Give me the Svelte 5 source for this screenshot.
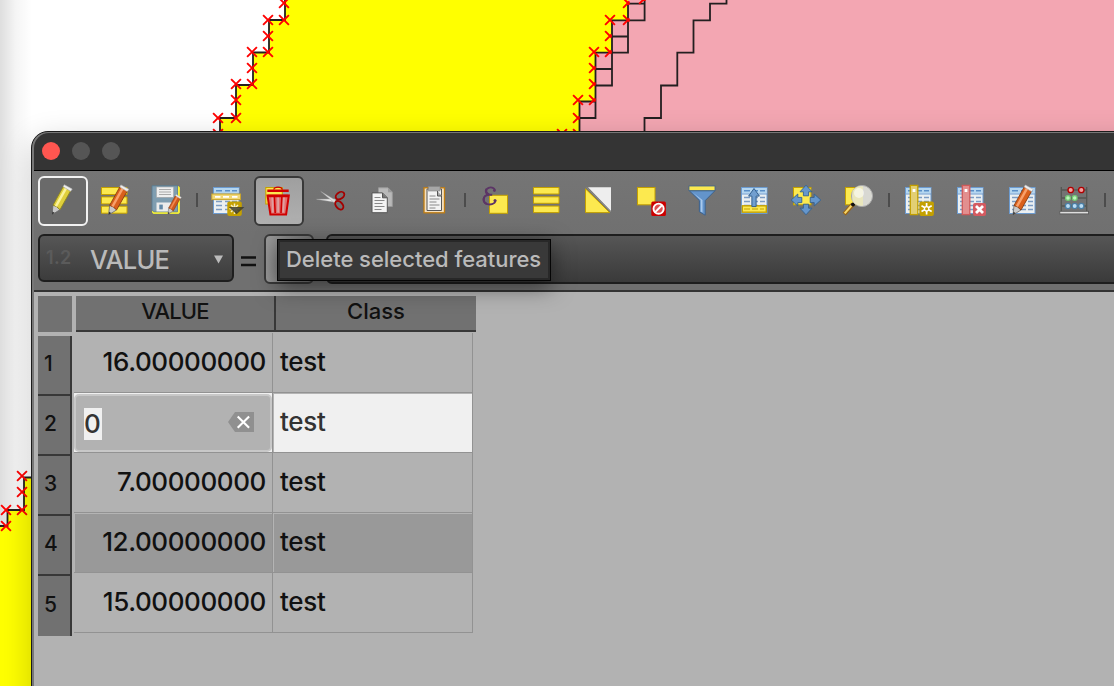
<script>
  const tools = [
    'pencil', 'edit', 'save', '|', 'add', 'trash', 'cut', 'copy', 'paste', '|',
    'expr', 'all', 'invert', 'deselect', 'filter', 'top', 'pan', 'zoom', '|',
    'newcol', 'delcol', 'editcol', 'abacus', '|'
  ];
  const labels = {
    pencil: 'Toggle editing', edit: 'Multi edit', save: 'Save edits', add: 'Add feature',
    trash: 'Delete selected features', cut: 'Cut', copy: 'Copy', paste: 'Paste',
    expr: 'Select by expression', all: 'Select all', invert: 'Invert selection', deselect: 'Deselect all',
    filter: 'Filter', top: 'Move selection to top', pan: 'Pan to selection', zoom: 'Zoom to selection',
    newcol: 'New field', delcol: 'Delete field', editcol: 'Organize columns', abacus: 'Field calculator'
  };
  const rows = [
    { value: '16.00000000', cls: 'test' },
    { value: '0', cls: 'test', editing: true },
    { value: '7.00000000', cls: 'test' },
    { value: '12.00000000', cls: 'test', dark: true },
    { value: '15.00000000', cls: 'test' }
  ];
  const vertices = [
    [284, 3], [284, 20], [268, 20], [268, 36], [268, 52], [252, 52], [252, 68], [252, 84],
    [236, 84], [236, 100], [236, 118], [218, 118], [218, 134],
    [610, 20], [594, 52], [578, 100], [562, 134],
    [22, 476], [22, 492], [22, 510], [6, 510], [6, 526]
  ];
  const halfVertices = [
    [628, 3], [628, 20], [610, 36], [610, 52], [594, 68], [594, 84], [594, 100], [578, 118], [578, 134], [644, -1]
  ];
</script>

{#snippet pencil(x, y, s, a, b, c)}
  <g transform="translate({x} {y}) scale({s})">
    <path d="M0 0L1-9.5L4.5-9L8-5Z" fill="#c9c9c9" stroke="#666" stroke-width=".8" />
    <path d="M0 0L.4-3.2L2.6-2Z" fill="#333" />
    <path d="M1-9.5L11.2-28L18.6-23.8L8-5L4.6-8Z" fill={b} stroke={c} stroke-width=".9" />
    <path d="M2.8-9L12.8-27L15-25.8L5-8Z" fill={a} />
    <path d="M11.2-28L12.3-30L20.2-25.6L18.6-23.4Z" fill="#eee" stroke="#bbb" stroke-width=".6" />
  </g>
{/snippet}

{#snippet sheet()}
  <rect x="11.5" y="11.5" width="25.5" height="26" fill="#ecf0f2" stroke="#6c9bd0" />
  <rect x="12" y="12" width="24.5" height="5.6" fill="#b4d6f0" />
  <path d="M14 14.8h6M23 14.8h5M30 14.8h5" stroke="#5a8fc8" stroke-width="1.5" />
  <path d="M12 18h25" stroke="#6c9bd0" />
  <path d="M14 21.5h6M23 21.5h5M30 21.5h5M14 25.5h6M23 25.5h5M30 25.5h5M14 29.5h6M23 29.5h5M30 29.5h5M14 33.5h6M23 33.5h5M30 33.5h5" stroke="#7c9cc4" stroke-width="1.3" />
{/snippet}

{#snippet icon(name)}
  <svg viewBox="0 0 50 50" aria-hidden="true">
    {#if name === 'pencil'}
      {@render pencil(14, 38.7, 1, '#fbf39a', '#dfcf3c', '#8c8420')}
    {:else if name === 'edit'}
      <g fill="#fce94f" stroke="#c4a000"><path d="M11.5 11.5h25.5v7h-25.5zM11.5 20.9h25.5v7h-25.5zM11.5 30.2h25.5v7h-25.5z" /></g>
      {@render pencil(18.6, 38.9, 1, '#f9a06a', '#d9601c', '#8a3d10')}
    {:else if name === 'save'}
      <rect x="10.5" y="10.5" width="27" height="27" rx="1.5" fill="#fff23a" stroke="#e6e63a" />
      <path d="M10 9.8h25.5v26H12L10 34z" fill="#7f9db0" stroke="#567a92" stroke-width=".8" />
      <rect x="14.5" y="11" width="17" height="10.3" fill="#eee" stroke="#a5a5a5" stroke-width=".6" />
      <path d="M17 13.5h12M17 16h12M17 18.5h12" stroke="#aaa" stroke-width="1.2" />
      <rect x="14.5" y="26.5" width="16" height="9" fill="#ececec" />
      <rect x="17.3" y="28.6" width="3.5" height="4.8" fill="#6389a8" />
      {@render pencil(26, 38.2, 0.66, '#f08a50', '#d0581c', '#8a3d10')}
    {:else if name === 'add'}
      {@render sheet()}
      <rect x="9.8" y="18" width="28.7" height="5.6" fill="#f0d878" stroke="#c9a52c" />
      <path d="M13 20.8h5.5M21 20.8h6M30 20.8h5.5" stroke="#fff" stroke-width="1.8" />
      <rect x="25.3" y="25.6" width="14.5" height="14.5" rx="2" fill="#c4a000" />
      <path d="M32.5 27.5v10.5M27.5 32.7h10M29 29l7 7M36 29l-7 7" stroke="#f7efc4" stroke-width="1.5" />
      <path d="M26.8 31h15.6l-7.8 7.2z" fill="#3d3c2c" fill-opacity=".85" />
    {:else if name === 'trash'}
      <rect x="11.8" y="11.5" width="16.5" height="16.5" fill="#fce94f" stroke="#c4a000" />
      <path d="M13.5 19.5h21.3l-2.7 19H16.4z" fill="#e27070" stroke="#d00000" stroke-width="2" />
      <path d="M20.4 21l.8 16M27.8 21l-.8 16" stroke="#d00000" stroke-width="1.6" />
      <path d="M18.3 21l.6 15.5M24.1 21v15.5M30 21l-.8 15.5" stroke="#dfa0a0" stroke-width="1.8" />
      <path d="M14 20h20.3" stroke="#d00000" stroke-width="2.6" />
      <path d="M13.3 14.7h21.4" stroke="#d00000" stroke-width="2.4" /><path d="M19.8 13.6q.4-2.4 4.2-2.4t4.2 2.4" fill="none" stroke="#d00000" stroke-width="1.3" />
    {:else if name === 'cut'}
      <path d="M10.5 23.3L29.5 23L28 26Z" fill="#ececec" stroke="#aaa" stroke-width=".4" /><path d="M14.6 15.3L30 24.5L28.5 27Z" fill="#dcdcdc" stroke="#999" stroke-width=".4" />
      <g fill="none" stroke="#a40000" stroke-width="1.9"><ellipse cx="34" cy="19.6" rx="4.7" ry="3.2" transform="rotate(-34 34 19.6)" /><ellipse cx="33.3" cy="29.2" rx="4.9" ry="3.2" transform="rotate(48 33.3 29.2)" /></g>
    {:else if name === 'copy'}
      <path d="M20.5 11.8h9.5l4.3 4.3v14.4H20.5z" fill="#b9b9b9" stroke="#999" /><path d="M30 12v4.2h4.2" fill="#999" />
      <path d="M14 16.9h10.5l4.8 4.8v15H14z" fill="#f3f3f3" stroke="#555" />
      <path d="M24.5 17v4.8h4.7" fill="#777" stroke="#555" /><path d="M16.5 21.5h6M16.5 24.5h10M16.5 27.5h8M16.5 30.5h10M16.5 33.5h7" stroke="#888" />
    {:else if name === 'paste'}
      <rect x="14" y="11.8" width="20.5" height="25" fill="#f4e0bf" stroke="#c17d11" stroke-width="1.3" />
      <path d="M17 13h14.5v21.5H17z" fill="#f3f3f3" stroke="#555" />
      <rect x="18.6" y="10.6" width="11.4" height="4.4" fill="#a7a7a7" stroke="#888" stroke-width=".6" />
      <path d="M27.5 15v5h4.5" fill="#aaa" stroke="#555" /><path d="M19.5 20h6M19.5 23h10M19.5 26h7M19.5 29h10M19.5 32h6" stroke="#888" />
    {:else if name === 'expr'}
      <rect x="19.5" y="19.3" width="18" height="18" fill="#fce94f" stroke="#c4a000" />
      <path d="M25 14.4c-.6-2.6-3.4-3.4-5.6-2.8c-4.6 1.2-4.6 6.6.4 7.2h2.4h-2.4c-8 0-8 9 -1.2 9.6c4 .3 6.4-1 7-4" fill="none" stroke="#5c3566" stroke-width="1.9" />
      <path d="M16.4 13c-1 2 0 4.6 2.6 5.4M14.2 21.5c-1.6 2.5 0 5.6 2.6 6.4" fill="none" stroke="#5c3566" stroke-width="2.2" />
      <circle cx="24.4" cy="14.6" r="1.4" fill="#5c3566" /><circle cx="25" cy="24.4" r="1.5" fill="#5c3566" />
    {:else if name === 'all'}
      <g fill="#fce94f" stroke="#c4a000"><path d="M11.5 11.5h25.5v6.5h-25.5zM11.5 20.8h25.5v6.5h-25.5zM11.5 30.1h25.5v6.5h-25.5z" /></g>
    {:else if name === 'invert'}
      <path d="M11.5 12.8v23.8h24.2z" fill="#fce94f" stroke="#c4a000" /><path d="M14 11.3h23v23.6z" fill="#eee" /><path d="M12.8 11.5L36.8 35.8" stroke="#8f8f88" />
    {:else if name === 'deselect'}
      <rect x="11.5" y="11.5" width="17.5" height="17.3" fill="#fce94f" stroke="#c4a000" />
      <rect x="25.3" y="25.4" width="14.6" height="14.6" rx="1.5" fill="#c00" /><circle cx="32.6" cy="32.7" r="5.1" fill="#e05050" stroke="#fff" stroke-width="1.9" /><path d="M36 29.3l-6.8 6.8" stroke="#fff" stroke-width="2" />
    {:else if name === 'filter'}
      <path d="M11.3 14.8h25.6L27.2 24.6v14.6l-5.8-3.4V24.6z" fill="#6394cb" stroke="#3f638c" />
      <path d="M15 16.8l7.7 7.3v11.5l1.8 1V24z" fill="#a9c9ec" /><rect x="11" y="10" width="26" height="4.6" fill="#fce94f" stroke="#3f638c" stroke-width=".8" />
    {:else if name === 'top'}
      {@render sheet()}
      <rect x="12.3" y="29.8" width="24" height="6.4" fill="#fce94f" stroke="#c4a000" stroke-width="1.4" /><path d="M14 33h6M22 33h6M30 33h4" stroke="#c4a000" />
      <path d="M24 12.5l5.4 7.6h-3.3v10.5h-4.2V20.1h-3.3z" fill="#729fcf" stroke="#34618f" />
    {:else if name === 'pan'}
      <rect x="11.5" y="11.5" width="17.5" height="17.3" fill="#fce94f" stroke="#c4a000" />
      <g fill="#6596cc" stroke="#34618f" stroke-width=".9">
        {#each [0, 90, 180, 270] as angle}<path d="M24 9.2l6 6.6h-3.4v4h-5.2v-4H18z" transform="rotate({angle} 24 24)" />{/each}
      </g>
    {:else if name === 'zoom'}
      <rect x="11.5" y="11.5" width="17.5" height="17.3" fill="#fce94f" stroke="#c4a000" />
      <path d="M18.7 28.5l-8.5 9.6" stroke="#9a6412" stroke-width="4.2" /><path d="M18 29l-7.3 8.3" stroke="#f8d86a" stroke-width="2" /><circle cx="19" cy="28.5" r="2" fill="#111" />
      <circle cx="28" cy="20" r="10.6" fill="#d8d8d2" stroke="#aaa" /><path d="M18.5 15a10 10 0 0 1 10.5-4.6v19a10 10 0 0 1-10.5-4.8z" fill="#e9e6bc" /><circle cx="25" cy="17" r="5" fill="#fff" fill-opacity=".55" />
    {:else if name === 'newcol' || name === 'delcol'}
      {@render sheet()}
      {#if name === 'newcol'}
        <rect x="16.3" y="9.4" width="7.5" height="29.2" fill="#e2cf74" stroke="#c4a000" stroke-width="1.3" />
        <rect x="25.3" y="25.4" width="14.6" height="14.6" rx="2" fill="#c4a000" />
        <g stroke="#fff" stroke-width="1.7"><path d="M32.6 27v11.4M27.5 29.8l10.2 5.8M27.5 35.6l10.2-5.8" /></g><circle cx="32.6" cy="32.7" r="2.8" fill="#fff" /><circle cx="32.6" cy="32.7" r="1.5" fill="#c4a000" />
      {:else}
        <rect x="16.3" y="9.4" width="7.5" height="29.2" fill="#e28f8f" stroke="#d05a5a" stroke-width="1.3" />
        <rect x="27" y="27" width="13" height="13" rx="2" fill="#d45a60" /><path d="M30 30l7 7M37 30l-7 7" stroke="#fff" stroke-width="2.8" />
      {/if}
      <rect x="18.6" y="13" width="2.8" height="3" fill="#fff" />
    {:else if name === 'editcol'}
      {@render sheet()}
      {@render pencil(15, 39, 1, '#f9a06a', '#d9601c', '#8a3d10')}
    {:else if name === 'abacus'}
      <path d="M11.3 11v25M36.7 11v25M11 14h26M11 22h26M11 30h26" stroke="#555753" stroke-width="1.3" fill="none" />
      <rect x="9.8" y="35.3" width="28.8" height="2.6" fill="#ddd" stroke="#555" stroke-width=".8" />
      <g stroke-width="1.3"><g fill="#f3a0a0" stroke="#b00000"><circle cx="20.7" cy="14" r="2.7" /><circle cx="31.3" cy="14" r="2.7" /></g>
      <g fill="#bdf5bd" stroke="#73c973"><circle cx="18" cy="22" r="2.4" /><circle cx="24.7" cy="22" r="2.4" /></g>
      <g fill="#b9dcf3" stroke="#4b7fa5"><circle cx="18" cy="30" r="2.6" /><circle cx="24.7" cy="30" r="2.6" /><circle cx="31.3" cy="30" r="2.6" /></g></g>
    {/if}
  </svg>
{/snippet}

<div class="desktop">
  <svg class="map" viewBox="0 0 1114 686" aria-hidden="true">
    <defs>
      <linearGradient id="edge"><stop offset="0" stop-color="#000" stop-opacity=".13" /><stop offset=".5" stop-color="#000" stop-opacity=".04" /><stop offset="1" stop-color="#000" stop-opacity="0" /></linearGradient>
    </defs>
    <rect width="1114" height="686" fill="#fff" />
    <rect width="32" height="686" fill="url(#edge)" />
    <path d="M285 0V20H269V52.5H253V85H236V118H220V686H1114V0Z" fill="#ff0" />
    <path d="M628 0V20H612V52.5H595.5V101.5H579.5V686H1114V0Z" fill="#f3a6b2" />
    <path d="M40 477.5H24V510H7.5V526H0V686H40Z" fill="#ff0" />
    <g fill="none" stroke="#231f20" stroke-width="1.8">
      <path d="M285 0V20H269V52.5H253V85H236V118H220V134" />
      <path d="M628 3.7V20.3H612V52.7H595.5V101.5H579.5V134M628 3.7H644.6V0M644.6 3.7V20.3H628V52.7H612M612 36.5H628M612 52.7V85.5H595.5M595.5 69H612M595.5 85V118H579.5" />
      <path d="M726.5 0V3.7H710V20.3H693.5V52.7H677.3V85.5H661V118H644.5V134" />
      <path d="M40 477.5H24V510H7.5V526H0" />
    </g>
    <g stroke="#f00" stroke-width="1.9">
      {#each vertices as [x, y]}<path d="M{x - 4.9} {y - 4.9}l9.8 9.8m0 -9.8l-9.8 9.8" />{/each}
      {#each halfVertices as [x, y]}<path fill="none" d="M{x - 4.9} {y - 4.9}l4.9 4.9l-4.9 4.9M{x} {y}l1.5 -1.5M{x} {y}l1.5 1.5" />{/each}
    </g>
  </svg>

  <section class="window">
    <header class="titlebar"><i class="close"></i><i></i><i></i></header>
    <div class="toolbar">
      {#each tools as t}
        {#if t === '|'}
          <span class="sep"></span>
        {:else}
          <button class="tool" class:checked={t === 'pencil'} class:hover={t === 'trash'} aria-label={labels[t]}>{@render icon(t)}</button>
        {/if}
      {/each}
    </div>
    <div class="filterbar">
      <div class="combo"><span class="kind">1.2</span><span class="name">VALUE</span><svg class="arrow" viewBox="0 0 9 9"><path d="M0 .5h9L4.5 8.5z" fill="#bbb" /></svg></div>
      <svg class="equals" viewBox="0 0 15 11"><path d="M0 1.5h15M0 9h15" stroke="#111" stroke-width="2.7" /></svg>
      <button class="exprbtn" aria-label="Expression"></button>
      <div class="field"></div>
      <div class="tooltip"><span>Delete selected features</span></div>
    </div>
    <div class="table">
      <div class="gutter">
        <div class="corner"></div>
        {#each rows as _, i}<div class="num">{i + 1}</div>{/each}
      </div>
      <div class="data">
        <div class="heads"><div class="tight">VALUE</div><div>Class</div></div>
        {#each rows as r}
          <div class="row" class:dark={r.dark} class:active={r.editing}>
            <div class="cell value">
              {#if r.editing}
                <div class="editor"><span class="sel">{r.value}</span><svg viewBox="0 0 26 20"><path d="M0 10L7 0H26V20H7Z" fill="#909090" /><path d="M9.7 4.4l11.4 11.4M21.1 4.4L9.7 15.8" stroke="#fff" stroke-width="2.1" /></svg></div>
              {:else}<span>{r.value}</span>{/if}
            </div>
            <div class="cell cls"><span>{r.cls}</span></div>
          </div>
        {/each}
      </div>
    </div>
  </section>
</div>

<style>
  :global(body) { overflow: hidden; }
  .desktop { position: relative; width: 1114px; height: 686px; overflow: hidden; font-family: Inter, "Liberation Sans", sans-serif; color: #111; }
  .desktop * { box-sizing: border-box; }
  .map { position: absolute; left: 0; top: 0; width: 1114px; height: 686px; }
  .window { position: absolute; left: 31px; top: 131px; width: 1140px; height: 620px; border: 1px solid #1c1c1c; border-radius: 17px 0 0 0; background: #727272; box-shadow: inset 2px 1px 0 #777, 0 10px 32px rgba(0, 0, 0, .2); padding: 1px 0 0 2px; overflow: hidden; }
  .titlebar { display: flex; align-items: center; gap: 12px; height: 38px; padding: 0 0 2px 8px; background: #343434; border-bottom: 1px solid #000; border-radius: 15px 0 0 0; }
  .titlebar i { width: 18px; height: 18px; border-radius: 50%; background: #555; }
  .titlebar .close { background: #ff5650; }
  .toolbar { display: flex; gap: 2px; height: 63px; padding: 5px 0 0 4px; background: linear-gradient(#757575, #707070); }
  .tool { flex: none; width: 50px; height: 50px; padding: 0; border: 2px solid transparent; border-radius: 6px; background: none; }
  .tool svg { display: block; width: 50px; height: 50px; margin: -2px; }
  .checked { border-color: #f2f2f2; background: #6a6a6a; }
  .hover { border-color: #393939; background: linear-gradient(#9f9f9f, #b0b0b0); }
  .sep { flex: none; width: 6px; height: 14px; margin-top: 17px; border: solid transparent; border-width: 0 2px; background: #4c4c4c content-box; background-clip: padding-box; }
  .filterbar { position: relative; display: flex; height: 58px; padding: 0 0 0 4px; border-bottom: 2px solid #333; background: #707070; }
  .combo { display: flex; align-items: center; width: 196px; height: 48px; padding: 0 9px 0 6px; border: 2px solid #1e1e1e; border-radius: 6px; background: linear-gradient(#565656, #3c3c3c); }
  .kind { width: 44px; font-size: 18px; font-weight: 600; color: #5b5b5b; margin-top: -2px; letter-spacing: .3px; }
  .name { flex: 1; margin-top: 2px; font-size: 25.5px; font-weight: 450; color: #bababa; letter-spacing: -.75px; }
  .arrow { width: 9px; height: 9px; margin-top: 2px; }
  .equals { width: 15px; height: 11px; margin: 22px 8px 0 7px; }
  .exprbtn { width: 50px; height: 50px; margin-right: 12px; border: 2px solid #393939; border-radius: 6px; background: linear-gradient(90deg, #999, #777); }
  .field { flex: 1; height: 50px; border: 2px solid #1e1e1e; border-radius: 6px 0 0 6px; background: linear-gradient(#565656, #3a3a3a); }
  .tooltip { position: absolute; z-index: 2; left: 243px; top: 5px; display: flex; align-items: center; width: 274px; height: 42px; padding: 0 0 2px 8px; border: 1px solid #050505; background: #393939; box-shadow: inset 0 0 0 2px #282828, 0 6px 22px rgba(0, 0, 0, .5); font-size: 22px; font-weight: 500; letter-spacing: -.03px; color: #bababa; white-space: nowrap; }
  .table { display: flex; align-items: flex-start; gap: 2px; height: 460px; padding: 4px 0 0 4px; background: #b2b2b2; }
  .gutter { width: 34px; }
  .corner { height: 36px; margin-bottom: 4px; background: #717171; }
  .num { display: flex; align-items: center; height: 60px; padding: 0 0 4px 6px; border-right: 2px solid #383838; border-bottom: 2px solid #383838; background: #717171; font-size: 21px; font-weight: 550; }
  .num:last-child { border-bottom: 0; padding-bottom: 3px; }
  .heads { display: flex; height: 36px; margin: 0 0 1px 2px; }
  .heads div { width: 200px; padding: 2px 0 0; border-right: 2px solid #383838; border-bottom: 2px solid #383838; background: #717171; text-align: center; font-size: 22px; line-height: 27px; font-weight: 500; }
  .heads .tight { letter-spacing: -.8px; }
  .heads div:last-child { border-right: 0; }
  .row { display: flex; width: 399px; height: 60px; }
  .cell { display: flex; align-items: center; height: 60px; border-right: 1px solid #929292; border-bottom: 1px solid #929292; font-size: 26px; font-weight: 550; }
  .value { width: 199px; justify-content: flex-end; padding-right: 6px; letter-spacing: -.4px; }
  .cls { width: 200px; padding-left: 7px; letter-spacing: -.3px; }
  .cell > span { margin-top: -2px; }
  .dark .cell { background: #999; box-shadow: inset 1px 1px 0 #b4b4b4; }
  .active .cls { background: #f0f0f0; box-shadow: inset 1px 1px 0 #b4b4b4; color: #333; }
  .active .value { padding: 1px 0 0; background: #f0f0f0; }
  .editor { display: flex; align-items: center; justify-content: space-between; width: 100%; height: 58px; padding: 0 16px 0 8px; border: 2px solid #c8c8c8; border-radius: 5px; background: #b2b2b2; }
  .editor svg { width: 26px; height: 20px; margin-top: -2px; }
  .sel { padding: 0; width: 18px; line-height: 32px; margin-top: 2px; background: #f0f0f0; color: #333; font-weight: 500; }
</style>
